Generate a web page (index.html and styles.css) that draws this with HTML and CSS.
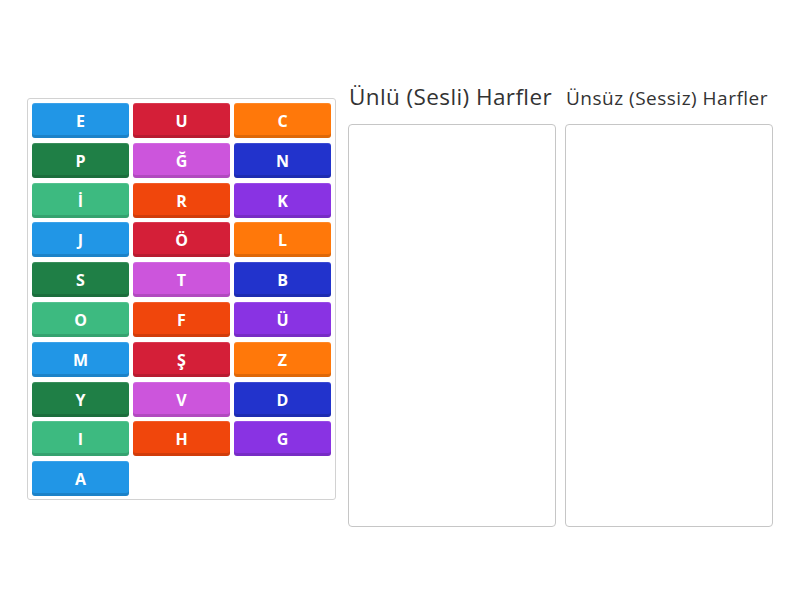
FILE: index.html
```html
<!DOCTYPE html>
<html lang="tr">
<head>
<meta charset="utf-8">
<title>Ünlü ve Ünsüz Harfler</title>
<link rel="stylesheet" href="styles.css">
</head>
<body>
<div class="page">
  <div class="pool">
    <div class="tile c-blue">E</div>
    <div class="tile c-red">U</div>
    <div class="tile c-orange">C</div>
    <div class="tile c-dkgreen">P</div>
    <div class="tile c-pink">Ğ</div>
    <div class="tile c-dkblue">N</div>
    <div class="tile c-ltgreen">İ</div>
    <div class="tile c-redorange">R</div>
    <div class="tile c-purple">K</div>
    <div class="tile c-blue">J</div>
    <div class="tile c-red">Ö</div>
    <div class="tile c-orange">L</div>
    <div class="tile c-dkgreen">S</div>
    <div class="tile c-pink">T</div>
    <div class="tile c-dkblue">B</div>
    <div class="tile c-ltgreen">O</div>
    <div class="tile c-redorange">F</div>
    <div class="tile c-purple">Ü</div>
    <div class="tile c-blue">M</div>
    <div class="tile c-red">Ş</div>
    <div class="tile c-orange">Z</div>
    <div class="tile c-dkgreen">Y</div>
    <div class="tile c-pink">V</div>
    <div class="tile c-dkblue">D</div>
    <div class="tile c-ltgreen">I</div>
    <div class="tile c-redorange">H</div>
    <div class="tile c-purple">G</div>
    <div class="tile c-blue">A</div>
  </div>
  <div class="groups">
    <div class="group">
      <div class="group-title big">Ünlü (Sesli) Harfler</div>
      <div class="drop"></div>
    </div>
    <div class="group">
      <div class="group-title small">Ünsüz (Sessiz) Harfler</div>
      <div class="drop"></div>
    </div>
  </div>
</div>
</body>
</html>
```
FILE: styles.css
```css
html, body {
  margin: 0;
  padding: 0;
  background: #ffffff;
}
body {
  font-family: "Open Sans", "Noto Sans", sans-serif;
  color: #333333;
}
.page {
  display: flex;
  align-items: flex-start;
  padding-left: 27px;
  gap: 12px;
}
.pool {
  margin-top: 98px;
  width: 309px;
  box-sizing: border-box;
  border: 1px solid #d2d2d2;
  border-radius: 3px;
  padding: 4px 4px 3px 4px;
  display: grid;
  grid-template-columns: repeat(3, 1fr);
  grid-auto-rows: 35px;
  column-gap: 4px;
  row-gap: 4.8px;
}
.tile {
  display: flex;
  align-items: center;
  justify-content: center;
  color: #ffffff;
  font-weight: 700;
  font-size: 16px;
  border-radius: 3px;
  box-shadow: inset 0 -3px 0 rgba(0, 0, 0, 0.13), inset 0 1px 0 rgba(255, 255, 255, 0.12);
  padding-top: 1px;
  box-sizing: border-box;
}
.c-blue { background: #2196e6; }
.c-red { background: #d41f38; }
.c-orange { background: #ff780a; }
.c-dkgreen { background: #1f7f46; }
.c-pink { background: #cc55dc; }
.c-dkblue { background: #2233cc; }
.c-ltgreen { background: #3dba80; }
.c-redorange { background: #f0460c; }
.c-purple { background: #8933e3; }

.groups {
  display: flex;
  gap: 9px;
  margin-top: 82px;
}
.group {
  width: 208px;
  display: flex;
  flex-direction: column;
}
.group-title {
  height: 30px;
  line-height: 30px;
  white-space: nowrap;
  margin-bottom: 12px;
  padding-left: 1px;
}
.group-title.big {
  font-size: 22.5px;
  letter-spacing: 0.4px;
}
.group-title.small {
  font-size: 19px;
  letter-spacing: 0.5px;
  padding-top: 1px;
  height: 29px;
}
.drop {
  height: 403px;
  box-sizing: border-box;
  border: 1px solid #c6c6c6;
  border-radius: 4px;
}
```
